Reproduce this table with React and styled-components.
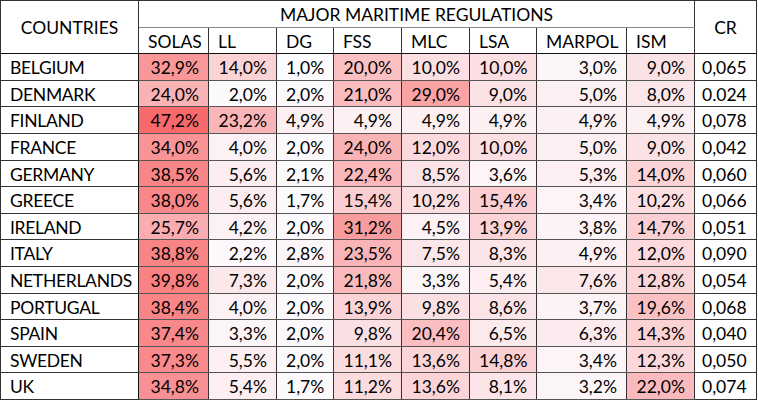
import React from "react";
import styled, { createGlobalStyle } from "styled-components";

const GlobalStyle = createGlobalStyle`
	html, body {
		margin: 0;
		padding: 0;
		background: #ffffff;
	}
	body {
		font-family: Lato, "Open Sans", sans-serif;
	}
`;

const Table = styled.table`
	border-collapse: collapse;
	table-layout: fixed;
	width: 757px;
	height: 400px;
	font-family: Lato, "Open Sans", sans-serif;
	font-size: 17.5px;
	color: #000;
	border: 1px solid #111;
`;

const Row = styled.tr`
	height: 26.6px;
`;

const Cell = styled.td`
	border: 1px solid #333;
	padding: 2px 9px 0 9px;
	white-space: nowrap;
	overflow: hidden;
	line-height: 1;
	vertical-align: middle;
`;

const HeadCell = styled(Cell).attrs({ as: "th" })`
	font-weight: 400;
	text-align: ${(p) => p.$align || "left"};
	border-bottom-color: ${(p) => (p.$light ? "#8a8a8a" : "#111")};
	padding-left: ${(p) => (p.$align === "center" ? "0" : "9px")};
	padding-right: ${(p) => (p.$align === "center" ? "0" : "9px")};
`;

const NameCell = styled(Cell)`
	text-align: left;
	letter-spacing: -0.3px;
	border-right-color: #111;
`;

const ValueCell = styled(Cell)`
	text-align: right;
	background: ${(p) => p.$bg};
	border-top-color: #555;
	border-bottom-color: #555;
`;

const RatioCell = styled(Cell)`
	text-align: left;
	padding-left: 7px;
	border-left-color: #111;
`;

const regs = ["SOLAS", "LL", "DG", "FSS", "MLC", "LSA", "MARPOL", "ISM"];
const widths = [138, 70, 68, 57, 68, 68, 67, 90, 68, 62];

const data = [
	["BELGIUM", [32.9, 14.0, 1.0, 20.0, 10.0, 10.0, 3.0, 9.0], "0,065"],
	["DENMARK", [24.0, 2.0, 2.0, 21.0, 29.0, 9.0, 5.0, 8.0], "0.024"],
	["FINLAND", [47.2, 23.2, 4.9, 4.9, 4.9, 4.9, 4.9, 4.9], "0,078"],
	["FRANCE", [34.0, 4.0, 2.0, 24.0, 12.0, 10.0, 5.0, 9.0], "0,042"],
	["GERMANY", [38.5, 5.6, 2.1, 22.4, 8.5, 3.6, 5.3, 14.0], "0,060"],
	["GREECE", [38.0, 5.6, 1.7, 15.4, 10.2, 15.4, 3.4, 10.2], "0,066"],
	["IRELAND", [25.7, 4.2, 2.0, 31.2, 4.5, 13.9, 3.8, 14.7], "0,051"],
	["ITALY", [38.8, 2.2, 2.8, 23.5, 7.5, 8.3, 4.9, 12.0], "0,090"],
	["NETHERLANDS", [39.8, 7.3, 2.0, 21.8, 3.3, 5.4, 7.6, 12.8], "0,054"],
	["PORTUGAL", [38.4, 4.0, 2.0, 13.9, 9.8, 8.6, 3.7, 19.6], "0,068"],
	["SPAIN", [37.4, 3.3, 2.0, 9.8, 20.4, 6.5, 6.3, 14.3], "0,040"],
	["SWEDEN", [37.3, 5.5, 2.0, 11.1, 13.6, 14.8, 3.4, 12.3], "0,050"],
	["UK", [34.8, 5.4, 1.7, 11.2, 13.6, 8.1, 3.2, 22.0], "0,074"],
];

const all = data.flatMap((d) => d[1]);
const min = Math.min(...all);
const max = Math.max(...all);

// excel style 2-colour scale, white -> red
function heat(v) {
	const t = (v - min) / (max - min);
	const lo = [252, 252, 255];
	const hi = [248, 105, 107];
	const c = lo.map((l, i) => Math.round(l + (hi[i] - l) * t));
	return `rgb(${c.join(",")})`;
}

const fmt = (v) => v.toFixed(1).replace(".", ",") + "%";

export default function App() {
	return (
		<>
			<GlobalStyle />
			<Table>
				<colgroup>
					{widths.map((w, i) => (
						<col key={i} style={{ width: w }} />
					))}
				</colgroup>
				<thead>
					<Row>
						<HeadCell rowSpan={2} $align="center">
							COUNTRIES
						</HeadCell>
						<HeadCell colSpan={8} $align="center" $light>
							MAJOR MARITIME REGULATIONS
						</HeadCell>
						<HeadCell rowSpan={2} $align="center">
							CR
						</HeadCell>
					</Row>
					<Row>
						{regs.map((r) => (
							<HeadCell key={r}>{r}</HeadCell>
						))}
					</Row>
				</thead>
				<tbody>
					{data.map(([name, vals, cr]) => (
						<Row key={name}>
							<NameCell>{name}</NameCell>
							{vals.map((v, i) => (
								<ValueCell key={i} $bg={heat(v)}>
									{fmt(v)}
								</ValueCell>
							))}
							<RatioCell>{cr}</RatioCell>
						</Row>
					))}
				</tbody>
			</Table>
		</>
	);
}
